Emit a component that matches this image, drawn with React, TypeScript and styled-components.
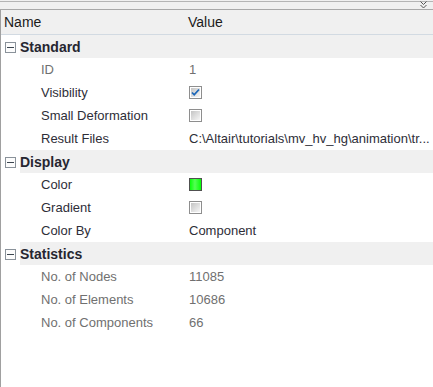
import React from 'react';
import styled, { createGlobalStyle } from 'styled-components';

type Prop = {
  label: string;
  kind: 'text' | 'check' | 'color';
  value?: string;
  checked?: boolean;
  color?: string;
  readOnly?: boolean;
};

type Group = { title: string; props: Prop[] };

const groups: Group[] = [
  {
    title: 'Standard',
    props: [
      { label: 'ID', kind: 'text', value: '1', readOnly: true },
      { label: 'Visibility', kind: 'check', checked: true },
      { label: 'Small Deformation', kind: 'check', checked: false },
      {
        label: 'Result Files',
        kind: 'text',
        value: 'C:\\Altair\\tutorials\\mv_hv_hg\\animation\\tr...',
      },
    ],
  },
  {
    title: 'Display',
    props: [
      { label: 'Color', kind: 'color', color: '#00ff00' },
      { label: 'Gradient', kind: 'check', checked: false },
      { label: 'Color By', kind: 'text', value: 'Component' },
    ],
  },
  {
    title: 'Statistics',
    props: [
      { label: 'No. of Nodes', kind: 'text', value: '11085', readOnly: true },
      { label: 'No. of Elements', kind: 'text', value: '10686', readOnly: true },
      { label: 'No. of Components', kind: 'text', value: '66', readOnly: true },
    ],
  },
];

const MinusBox = () => (
  <svg width="11" height="11" viewBox="0 0 11 11">
    <rect x="0.5" y="0.5" width="10" height="10" fill="#fcfcfc" stroke="#8a929a" />
    <line x1="2" y1="5.5" x2="9" y2="5.5" stroke="#3c4650" />
  </svg>
);

const CheckBox = ({ checked }: { checked?: boolean }) => (
  <svg width="13" height="13" viewBox="0 0 13 13">
    <defs>
      <linearGradient id="cbg" x1="0" y1="0" x2="1" y2="1">
        <stop offset="0" stopColor="#c4c4c4" />
        <stop offset="1" stopColor="#f6f6f6" />
      </linearGradient>
    </defs>
    <rect x="0.5" y="0.5" width="12" height="12" fill="#fff" stroke="#8e8e8e" />
    <rect x="2" y="2" width="9" height="9" fill="url(#cbg)" />
    {checked && (
      <path d="M3 6.5 L5.2 8.8 L10 3.5" fill="none" stroke="#1c67b8" strokeWidth="1.8" />
    )}
  </svg>
);

const ColorSwatch = ({ color }: { color: string }) => (
  <svg width="13" height="13" viewBox="0 0 13 13">
    <defs>
      <linearGradient id="swg" x1="0" y1="0" x2="1" y2="0">
        <stop offset="0" stopColor={color} />
        <stop offset="0.45" stopColor="#55ff55" />
        <stop offset="1" stopColor={color} />
      </linearGradient>
    </defs>
    <rect x="0.5" y="0.5" width="12" height="12" fill="url(#swg)" stroke="#505050" />
  </svg>
);

const Chevrons = () => (
  <svg width="7" height="8" viewBox="0 0 7 8">
    <path d="M0.5 0.5 L3.5 3.5 L6.5 0.5 M0.5 4 L3.5 7 L6.5 4" fill="none" stroke="#555" />
  </svg>
);

const App = () => {
  return (
    <>
      <GlobalStyle />
      <Page>
        <TopStrip>
          <Chevrons />
        </TopStrip>
        <Panel>
          <HeaderRow>
            <HeaderCell>Name</HeaderCell>
            <HeaderCell>Value</HeaderCell>
          </HeaderRow>
          {groups.map((group) => (
            <React.Fragment key={group.title}>
              <GroupRow>
                <Expander>
                  <MinusBox />
                </Expander>
                <GroupTitle>{group.title}</GroupTitle>
              </GroupRow>
              {group.props.map((p) => (
                <PropRow key={p.label}>
                  <span />
                  <PropLabel $readOnly={p.readOnly}>{p.label}</PropLabel>
                  <PropValue $readOnly={p.readOnly}>
                    {p.kind === 'text' && p.value}
                    {p.kind === 'check' && <CheckBox checked={p.checked} />}
                    {p.kind === 'color' && <ColorSwatch color={p.color || '#0f0'} />}
                  </PropValue>
                </PropRow>
              ))}
            </React.Fragment>
          ))}
        </Panel>
      </Page>
    </>
  );
};

export default App;

const GlobalStyle = createGlobalStyle`
  html, body {
    margin: 0;
    padding: 0;
    background: #ffffff;
  }
  body {
    font-family: "Liberation Sans", Arial, sans-serif;
  }
`;

const Page = styled.div`
  width: 433px;
  height: 387px;
  background: #ffffff;
  display: flex;
  flex-direction: column;
  overflow: hidden;
`;

const TopStrip = styled.div`
  height: 10px;
  box-sizing: border-box;
  background: #f0f0f0;
  box-shadow: inset 0 1px 0 #f0f0f0, inset 0 2px 0 #b4b4b4;
  border-bottom: 1px solid #a8a8a8;
  display: flex;
  justify-content: flex-end;
  align-items: flex-start;
  padding: 1px 6px 0 0;
`;

const Panel = styled.div`
  flex: 1;
  border-left: 1px solid #a0a0a0;
  display: flex;
  flex-direction: column;
`;

const HeaderRow = styled.div`
  height: 25px;
  box-sizing: border-box;
  background: #f0f0f0;
  border-bottom: 1px solid #d2dae2;
  display: grid;
  grid-template-columns: 187px 1fr;
  align-items: center;
  font-size: 14px;
  color: #1b1b1b;

  & > :first-child {
    padding-left: 3px;
  }
`;

const HeaderCell = styled.div`
  white-space: nowrap;
`;

const GroupRow = styled.div`
  height: 23px;
  display: grid;
  grid-template-columns: 19px 1fr;
  align-items: stretch;
`;

const Expander = styled.div`
  display: flex;
  align-items: center;
  justify-content: center;
  padding-top: 1px;
`;

const GroupTitle = styled.div`
  background: #f0f0f0;
  display: flex;
  align-items: center;
  font-weight: 700;
  font-size: 14px;
  color: #262630;
`;

const PropRow = styled.div`
  height: 23px;
  display: grid;
  grid-template-columns: 19px 168px 1fr;
  align-items: center;
  font-size: 13px;
`;

const PropLabel = styled.div<{ $readOnly?: boolean }>`
  padding-left: 21px;
  white-space: nowrap;
  color: ${(p) => (p.$readOnly ? '#707070' : '#2e2e38')};
`;

const PropValue = styled.div<{ $readOnly?: boolean }>`
  padding-left: 1px;
  white-space: nowrap;
  line-height: 23px;
  height: 23px;
  color: ${(p) => (p.$readOnly ? '#707070' : '#2e2e38')};

  svg {
    vertical-align: middle;
    position: relative;
    top: -1px;
  }
`;
